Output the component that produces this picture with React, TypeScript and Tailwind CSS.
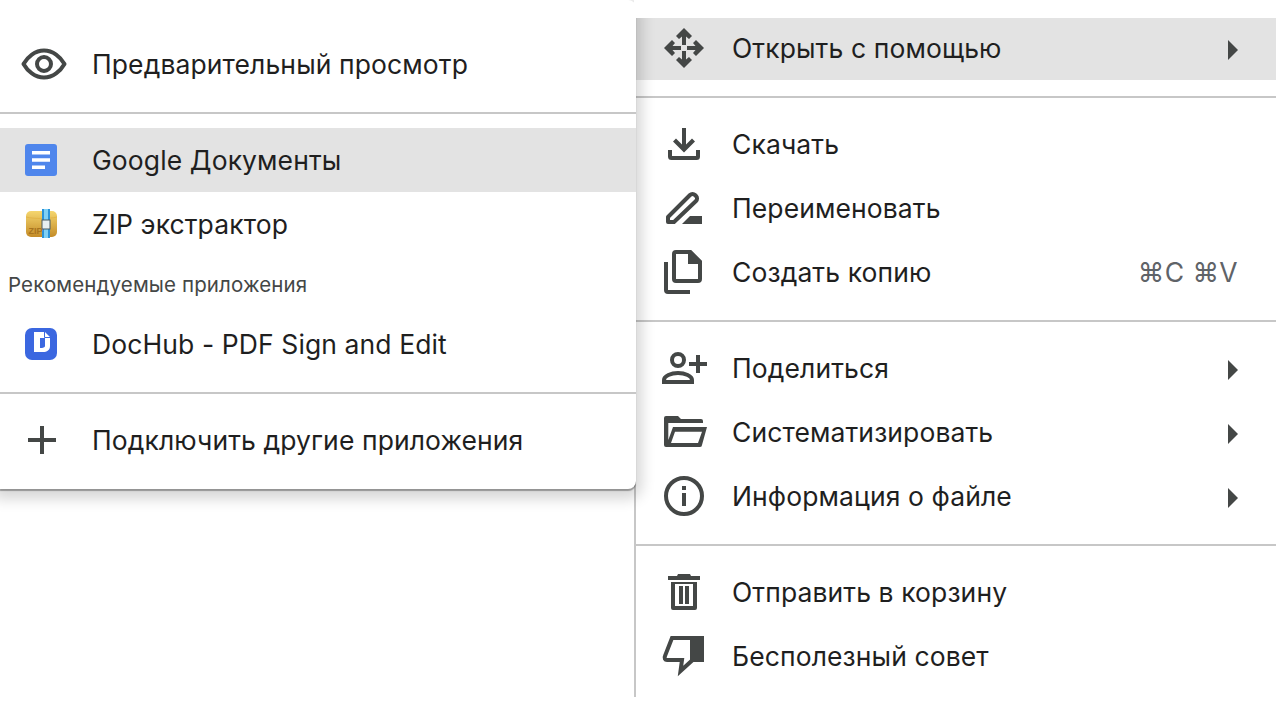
import React from 'react';

const ic = '#444746';

function Eye() {
  return (
    <svg width="48" height="48" viewBox="0 0 48 48" fill="none">
      <path d="M24 10.500C15 10.500 7.500 17 3.500 24c4 7 11.500 13.500 20.500 13.500S40.500 31 44.500 24C40.500 17 33 10.500 24 10.500z" stroke={ic} strokeWidth="4" strokeLinejoin="round" />
      <circle cx="24" cy="24" r="7" stroke={ic} strokeWidth="4" />
    </svg>
  );
}
function Docs() {
  return (
    <svg width="32" height="32" viewBox="0 0 32 32">
      <rect width="32" height="32" rx="3" fill="#4f86ec" />
      <path d="M7 7h18v3.500H7zM7 14.300h18v3.500H7zM7 21.500h13v3.500H7z" fill="#fff" />
    </svg>
  );
}
function Zip() {
  return (
    <svg width="32" height="32" viewBox="0 0 32 32">
      <defs>
        <linearGradient id="zg" x1="0" y1="0" x2="0" y2="1">
          <stop offset="0" stopColor="#f5d66e" />
          <stop offset="1" stopColor="#c48c28" />
        </linearGradient>
      </defs>
      <rect x="1" y="3" width="31" height="26" rx="5" fill="url(#zg)" />
      <path d="M1 9c8 2 23 2 31 0" stroke="#e3b548" strokeWidth="1" fill="none" />
      <rect x="17" y="1" width="8" height="29" fill="#2a93d8" />
      <rect x="19" y="1" width="4" height="29" fill="#7fd0f5" />
      <rect x="17" y="12" width="8" height="9" fill="#e8eef0" stroke="#4a5a60" strokeWidth="1" />
      <text x="3.500" y="26" fontSize="9" fontFamily="Liberation Sans, sans-serif" fontWeight="700" fill="#a8741e">ZIP</text>
    </svg>
  );
}
function DocHub() {
  return (
    <svg width="32" height="32" viewBox="0 0 32 32">
      <rect width="32" height="32" rx="7" fill="#3b67e0" />
      <path fillRule="evenodd" d="M9 4h11l5 5v9c0 4-3 6-7 6H9zM15 10h5v8c0 1.500-2 2-5 2z" fill="#fff" />
      <path d="M19.500 4v5.500H25" stroke="#3b67e0" strokeWidth="1" fill="none" />
    </svg>
  );
}
function Plus() {
  return (
    <svg width="48" height="48" viewBox="0 0 48 48">
      <path d="M10 22h12V10h4v12h12v4H26v12h-4V26H10z" fill={ic} />
    </svg>
  );
}
function Move() {
  return (
    <svg width="48" height="48" viewBox="0 0 48 48" fill={ic}>
      <path d="M24 4l8 8-3 3-3-2.500V21h-4v-8.500L19 15l-3-3z" />
      <path d="M24 44l8-8-3-3-3 2.500V27h-4v8.500L19 33l-3 3z" />
      <path d="M4 24l8-8 3 3-2.500 3H21v4h-8.500l2.500 3-3 3z" />
      <path d="M44 24l-8-8-3 3 2.500 3H27v4h8.500L33 29l3 3z" />
    </svg>
  );
}
function Download() {
  return (
    <svg width="48" height="48" viewBox="0 0 48 48" fill={ic}>
      <path d="M22 8h4v16.500l6-6 3 3L24 32.500 13 21.500l3-3 6 6z" />
      <path d="M8 30h4v6h24v-6h4v6.500a3.500 3.500 0 0 1-3.500 3.500h-25A3.500 3.500 0 0 1 8 36.500z" />
    </svg>
  );
}
function Rename() {
  return (
    <svg width="48" height="48" viewBox="0 0 48 48">
      <path d="M8 38v-5L30 11a3.500 3.500 0 0 1 5 0l1 1a3.500 3.500 0 0 1 0 5L14 38z" fill="none" stroke={ic} strokeWidth="4" strokeLinejoin="round" />
      <path d="M22 40l8-8h12v8z" fill={ic} />
    </svg>
  );
}
function Copy() {
  return (
    <svg width="48" height="48" viewBox="0 0 48 48" fill="none">
      <path d="M14 6a2 2 0 0 1 2-2h14l10 10v17a2 2 0 0 1-2 2H16a2 2 0 0 1-2-2z" stroke={ic} strokeWidth="4" strokeLinejoin="round" />
      <path d="M28 2h3l11 11v3H28z" fill={ic} />
      <path d="M6 14v28a2 2 0 0 0 2 2h22" stroke={ic} strokeWidth="4" />
    </svg>
  );
}
function Share() {
  return (
    <svg width="48" height="48" viewBox="0 0 48 48" fill="none">
      <circle cx="18" cy="16" r="6" stroke={ic} strokeWidth="4" />
      <path d="M4 38v-2c0-4 7-7 14-7s14 3 14 7v2z" stroke={ic} strokeWidth="4" />
      <path d="M36 11h4v7h7v4h-7v7h-4v-7h-7v-4h7z" fill={ic} />
    </svg>
  );
}
function Folder() {
  return (
    <svg width="48" height="48" viewBox="0 0 48 48" fill={ic}>
      <path fillRule="evenodd" d="M4 10a2 2 0 0 1 2-2h12l3 3h20a2 2 0 0 1 2 2v6h4l-5 18a2 2 0 0 1-2 2H6a2 2 0 0 1-2-2zM8.300 15H43v4H13L8.300 32zM15 23.700h27L38 35H11z" />
    </svg>
  );
}
function Info() {
  return (
    <svg width="48" height="48" viewBox="0 0 48 48" fill="none">
      <circle cx="24" cy="24" r="18" stroke={ic} strokeWidth="4" />
      <rect x="22" y="21" width="4" height="13" fill={ic} />
      <rect x="22" y="14" width="4" height="4" fill={ic} />
    </svg>
  );
}
function Trash() {
  return (
    <svg width="48" height="48" viewBox="0 0 48 48" fill={ic}>
      <path fillRule="evenodd" d="M18 6h12l1 2h9v4H8V8h9zM11 14h26v26a2 2 0 0 1-2 2H13a2 2 0 0 1-2-2zM15 16v22h18V16z" />
      <path d="M19 18h4v18h-4zM25 18h4v18h-4z" />
    </svg>
  );
}
function ThumbDown() {
  return (
    <svg width="48" height="48" viewBox="0 0 48 48" fill="none">
      <path d="M12 6h20v22.500L20.500 39l1.500-11H7c-2 0-3-2-2-4z" stroke={ic} strokeWidth="4" strokeLinejoin="miter" />
      <rect x="30" y="4" width="14" height="26" fill={ic} />
    </svg>
  );
}
function Caret({ className = 'mt-1' }: { className?: string }) {
  return <div className={`h-0 w-0 border-y-[10px] border-l-[10px] border-y-transparent border-l-[#444746] ${className}`} />;
}

const labelCls = 'flex-1 text-[26.5px] leading-none tracking-[0.1px] text-[#1f1f1f]';

function Row({ icon, label, hl, ipr = 'pr-[4px]' }: { icon: React.ReactNode; label: string; hl?: boolean; ipr?: string }) {
  return (
    <div className={`flex h-16 items-center ${hl ? 'bg-[#e3e3e3]' : ''}`}>
      <div className={`flex w-[92px] shrink-0 justify-center ${ipr}`}>{icon}</div>
      <div className={labelCls}>{label}</div>
    </div>
  );
}
function RowR({ icon, label, hl, right, h = 'h-16', up }: { icon: React.ReactNode; label: string; hl?: boolean; right?: React.ReactNode; h?: string; up?: boolean }) {
  return (
    <div className={`flex items-center pr-[38px] ${h} ${hl ? 'bg-[#e3e3e3]' : ''}`}>
      <div className={`flex w-[96px] shrink-0 justify-center ${up ? 'pb-[2px]' : ''}`}>{icon}</div>
      <div className={`${labelCls} ${up ? 'pb-[2px]' : ''}`}>{label}</div>
      {right}
    </div>
  );
}
function Hr({ className }: { className: string }) {
  return <div className={`h-[2px] bg-[#c7c7c7] ${className}`} />;
}

export default function App() {
  return (
    <div className="flex h-[708px] w-[1276px] overflow-hidden bg-white font-['Inter',sans-serif]">
      <div className="relative z-10 flex h-[489px] w-[636px] shrink-0 flex-col rounded-r-[8px] bg-white pt-8 shadow-[0_2px_1px_rgba(0,0,0,0.32),0_4px_14px_6px_rgba(0,0,0,0.16)]">
        <Row icon={<Eye />} label="Предварительный просмотр" />
        <Hr className="mb-[14px] mt-4" />
        <Row hl ipr="pr-[10px]" icon={<Docs />} label="Google Документы" />
        <Row ipr="pr-[10px]" icon={<Zip />} label="ZIP экстрактор" />
        <div className="flex h-[56px] items-center pl-2 pt-[2px] text-[20.5px] tracking-[0.12px] text-[#444746]">Рекомендуемые приложения</div>
        <Row ipr="pr-[10px]" icon={<DocHub />} label="DocHub - PDF Sign and Edit" />
        <Hr className="mb-[14px] mt-4" />
        <Row ipr="pr-[8px]" icon={<Plus />} label="Подключить другие приложения" />
      </div>
      <div className="-ml-[2px] flex w-[642px] shrink-0 flex-col">
        <div className="relative z-20 h-[18px] bg-white" />
        <div className="h-[679px] border-l-2 border-[#c7c7c7] bg-white">
          <RowR hl up h="h-[62px]" icon={<Move />} label="Открыть с помощью" right={<Caret className="mt-[2px]" />} />
          <Hr className="mb-[14px] mt-4" />
          <RowR icon={<Download />} label="Скачать" />
          <RowR icon={<Rename />} label="Переименовать" />
          <RowR icon={<Copy />} label="Создать копию" right={<span className="text-[26.5px] leading-none tracking-[0.4px] text-[#5f6368]">⌘C ⌘V</span>} />
          <Hr className="mb-[14px] mt-4" />
          <RowR icon={<Share />} label="Поделиться" right={<Caret />} />
          <RowR icon={<Folder />} label="Систематизировать" right={<Caret />} />
          <RowR icon={<Info />} label="Информация о файле" right={<Caret />} />
          <Hr className="mb-[14px] mt-4" />
          <RowR icon={<Trash />} label="Отправить в корзину" />
          <RowR icon={<ThumbDown />} label="Бесполезный совет" />
        </div>
      </div>
    </div>
  );
}
